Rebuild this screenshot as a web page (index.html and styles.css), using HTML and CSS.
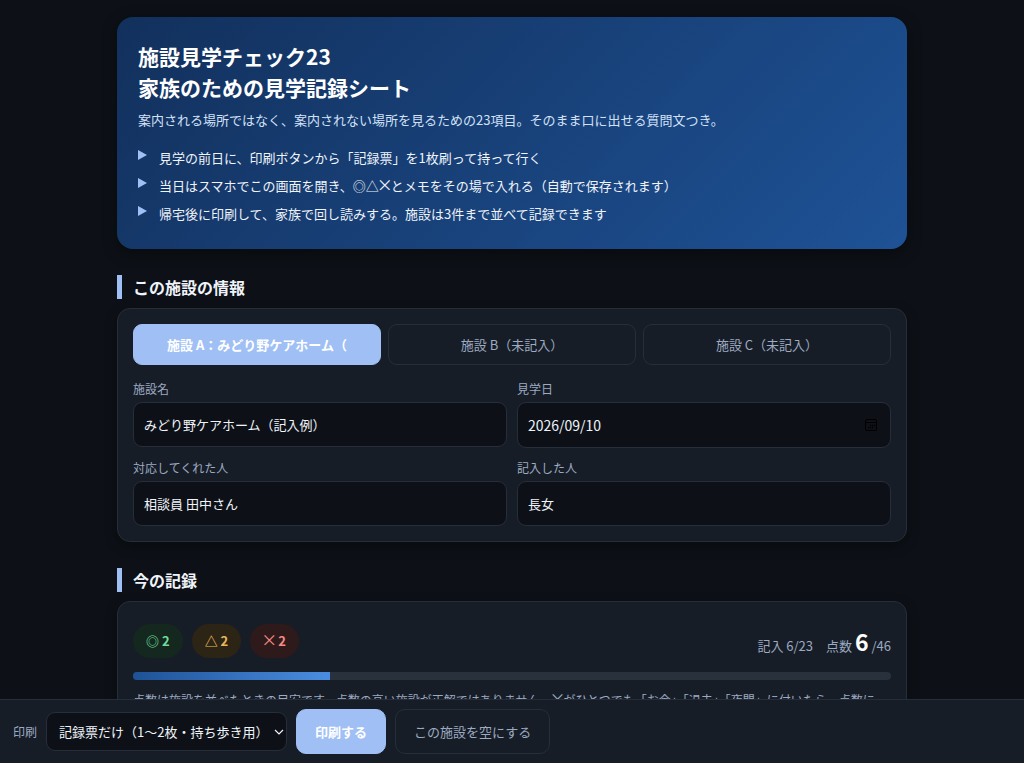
FILE: index.html
```html
<!DOCTYPE html>
<html lang="ja">
<head>
    <meta charset="UTF-8">
    <meta name="viewport" content="width=device-width, initial-scale=1.0">
    <title>施設見学チェック23</title>
    <link rel="stylesheet" href="styles.css">
</head>
<body>
    <main class="container">
        <header class="hero">
            <h1>施設見学チェック23<br>家族のための見学記録シート</h1>
            <p>案内される場所ではなく、案内されない場所を見るための23項目。そのまま口に出せる質問文つき。</p>
            <ul class="steps">
                <li>見学の前日に、印刷ボタンから「記録票」を1枚刷って持って行く</li>
                <li><span>当日はスマホでこの画面を開き、◎△<span class="cross">×</span>とメモをその場で入れる（自動で保存されます）</span></li>
                <li>帰宅後に印刷して、家族で回し読みする。施設は3件まで並べて記録できます</li>
            </ul>
        </header>

        <h2>この施設の情報</h2>
        <section class="card">
            <div class="tabs">
                <button type="button" class="tab active">施設 A：みどり野ケアホーム（</button>
                <button type="button" class="tab">施設 B（未記入）</button>
                <button type="button" class="tab">施設 C（未記入）</button>
            </div>
            <form class="fields">
                <div class="field">
                    <label for="name">施設名</label>
                    <input type="text" id="name" value="みどり野ケアホーム（記入例）">
                </div>
                <div class="field">
                    <label for="date">見学日</label>
                    <div class="date-box">
                        <input type="text" id="date" inputmode="numeric" value="2026/09/10">
                        <svg width="14" height="14" viewBox="0 0 14 14" fill="none" stroke="#000" aria-hidden="true">
                            <rect x="1.5" y="1.5" width="11" height="11" rx="1.5"/>
                            <path d="M1.5 4.5h11"/>
                            <path d="M6 7.5h1.3M8 7.5h1.3M10 7.5h1.3M4 9.7h1.3M6 9.7h1.3M8 9.7h1.3" stroke-width="1.3"/>
                        </svg>
                    </div>
                </div>
                <div class="field">
                    <label for="staff">対応してくれた人</label>
                    <input type="text" id="staff" value="相談員 田中さん">
                </div>
                <div class="field">
                    <label for="writer">記入した人</label>
                    <input type="text" id="writer" value="長女">
                </div>
            </form>
        </section>

        <h2>今の記録</h2>
        <section class="card">
            <div class="summary">
                <div class="pills">
                    <span class="pill good">◎ 2</span>
                    <span class="pill fair">△ 2</span>
                    <span class="pill bad"><span class="cross">×</span> 2</span>
                </div>
                <div class="score">
                    <span>記入 6/23</span>
                    <span>点数 <strong>6</strong> /46</span>
                </div>
            </div>
            <div class="progress"><div class="progress-bar" style="width: 26%"></div></div>
            <p class="note">点数は施設を並べたときの目安です。点数の高い施設が正解ではありません。<span class="cross">×</span>がひとつでも「お金」「退去」「夜間」に付いたら、点数に</p>
        </section>
    </main>

    <div class="toolbar">
        <label for="print-mode">印刷</label>
        <select id="print-mode">
            <option>記録票だけ（1〜2枚・持ち歩き用）</option>
        </select>
        <button type="button" class="btn primary">印刷する</button>
        <button type="button" class="btn">この施設を空にする</button>
    </div>
</body>
</html>
```

FILE: styles.css
```css
* {
    box-sizing: border-box;
}
body {
    margin: 0;
    padding: 17px 16px;
    background: #0d1117;
    color: #f0f4fa;
    font-family: "Noto Sans CJK JP", sans-serif;
    font-size: 13px;
    line-height: 22px;
}
.container {
    max-width: 790px;
    margin: 0 auto;
}
.hero {
    padding: 24px 21px 21px;
    border-radius: 16px;
    background: linear-gradient(135deg, #12305c, #1e5296);
    box-shadow: 0 4px 14px rgba(0, 0, 0, 0.5);
}
h1 {
    margin: 0 0 6px;
    color: #fff;
    font-size: 21px;
    line-height: 31px;
}
.hero p {
    margin: 0 0 13px;
    color: #d3e1f8;
}
.steps {
    margin: 0;
    padding: 0;
    list-style: none;
}
.steps li {
    display: flex;
    gap: 12px;
    padding: 3px 0;
}
.steps li::before {
    content: "";
    flex-shrink: 0;
    width: 9px;
    height: 10px;
    margin-top: 3px;
    background: #a0c0f5;
    clip-path: polygon(0 0, 100% 50%, 0 100%);
}
.cross {
    margin: 0 -2px;
    font-size: 16px;
    font-weight: normal;
    line-height: 1;
}
h2 {
    margin: 26px 0 9px;
    padding-left: 11px;
    border-left: 5px solid #a0c0f5;
    font-size: 16px;
    line-height: 24px;
}
.card {
    padding: 15px;
    border: 1px solid #262e39;
    border-radius: 13px;
    background: #171d26;
    box-shadow: 0 4px 12px rgba(0, 0, 0, 0.4);
}
button, input, select {
    font-family: inherit;
    font-size: 13px;
}
.tabs {
    display: grid;
    grid-template-columns: repeat(3, 1fr);
    gap: 7px;
    margin-bottom: 14px;
}
.tab {
    height: 41px;
    border: 1px solid #262e39;
    border-radius: 9px;
    background: #171d26;
    color: #9caac2;
    cursor: pointer;
}
.tab.active {
    border-color: #a0c0f5;
    background: #a0c0f5;
    color: #fff;
    font-weight: bold;
}
.fields {
    display: grid;
    grid-template-columns: 1fr 1fr;
    gap: 10px;
}
label {
    color: #9caac2;
    font-size: 12px;
}
.field label {
    display: block;
    line-height: 20px;
    margin-bottom: 3px;
}
.field input {
    display: block;
    width: 100%;
    height: 45px;
    padding: 0 10px;
    border: 1px solid #262e39;
    border-radius: 9px;
    background: #0d1117;
    color: #f0f4fa;
}
.date-box {
    position: relative;
}
.field .date-box input {
    height: 46px;
    padding-right: 36px;
    font-size: 14px;
}
.date-box svg {
    position: absolute;
    top: 16px;
    right: 13px;
}
.summary {
    display: flex;
    justify-content: space-between;
    align-items: flex-end;
    padding-top: 7px;
    margin-bottom: 14px;
}
.pills {
    display: flex;
    gap: 9px;
}
.pill {
    padding: 6px 13px;
    border-radius: 17px;
    font-weight: bold;
}
.good {
    background: #14281f;
    color: #6fdc9c;
}
.fair {
    background: #2c2415;
    color: #e8b95a;
}
.bad {
    background: #2f1a1b;
    color: #f58a84;
}
.score {
    display: flex;
    align-items: baseline;
    gap: 13px;
    line-height: 24px;
    color: #9caac2;
}
.score strong {
    color: #fff;
    font-size: 23px;
}
.progress {
    height: 8px;
    border-radius: 4px;
    background: #28313c;
    overflow: hidden;
}
.progress-bar {
    height: 100%;
    background: linear-gradient(90deg, #1e5296, #4a8de0);
}
.note {
    margin: 10px 0 0;
    color: #9caac2;
    font-size: 12px;
    line-height: 20px;
}
.toolbar {
    position: fixed;
    left: 0;
    right: 0;
    bottom: 0;
    display: flex;
    align-items: center;
    gap: 9px;
    padding: 9px 13px;
    border-top: 1px solid #262e39;
    background: #171d26;
}
.toolbar select {
    appearance: none;
    height: 39px;
    padding: 0 17px 0 12px;
    border: 1px solid #262e39;
    border-radius: 9px;
    background: #0d1117 url("data:image/svg+xml,%3Csvg xmlns='http://www.w3.org/2000/svg' width='10' height='6' fill='none' stroke='%23f0f4fa' stroke-width='1.2'%3E%3Cpath d='M1 1l4 4 4-4'/%3E%3C/svg%3E") no-repeat right 2px center;
    color: #f0f4fa;
}
.btn {
    height: 45px;
    padding: 0 18px;
    border: 1px solid #262e39;
    border-radius: 10px;
    background: #171d26;
    color: #9caac2;
    cursor: pointer;
}
.btn.primary {
    border-color: #a0c0f5;
    background: #a0c0f5;
    color: #fff;
    font-weight: bold;
}
```
